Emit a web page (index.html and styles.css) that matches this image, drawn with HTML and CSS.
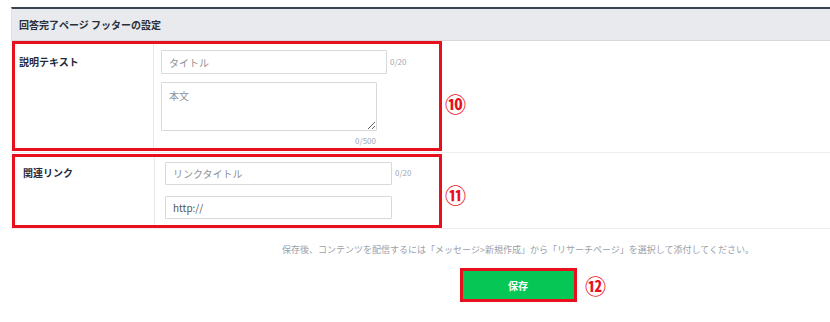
FILE: index.html
```html
<!DOCTYPE html>
<html lang="ja">
<head>
    <meta charset="UTF-8">
    <meta name="viewport" content="width=device-width, initial-scale=1.0">
    <title>回答完了ページ フッターの設定</title>
    <link rel="stylesheet" href="styles.css">
</head>
<body>
    <div class="pagina">
        <div class="cabecera">回答完了ページ フッターの設定</div>

        <div class="fila">
            <div class="marco marco-texto">
                <div class="etiqueta">説明テキスト</div>
                <div class="campos">
                    <div class="linea">
                        <input type="text" class="entrada entrada-titulo" placeholder="タイトル">
                        <span class="contador">0/20</span>
                    </div>
                    <textarea class="cuerpo" placeholder="本文"></textarea>
                    <div class="contador contador-cuerpo">0/500</div>
                </div>
            </div>
            <span class="numero numero-10">⑩</span>
        </div>

        <div class="fila">
            <div class="marco marco-enlace">
                <div class="etiqueta">関連リンク</div>
                <div class="campos">
                    <div class="linea">
                        <input type="text" class="entrada" placeholder="リンクタイトル">
                        <span class="contador">0/20</span>
                    </div>
                    <div class="linea">
                        <input type="text" class="entrada" value="http://">
                    </div>
                </div>
            </div>
            <span class="numero numero-11">⑪</span>
        </div>

        <div class="pie">
            <p class="nota">保存後、コンテンツを配信するには「メッセージ&gt;新規作成」から「リサーチページ」を選択して添付してください。</p>
            <div class="acciones">
                <button class="guardar">保存</button>
                <span class="numero numero-12">⑫</span>
            </div>
        </div>
    </div>
</body>
</html>
```

FILE: styles.css
```css
body {
    margin: 0;
    font-family: "Noto Sans CJK JP", "Noto Sans", sans-serif;
    color: #333;
    background: #fff;
}
.pagina {
    padding: 7px 0 0 11px;
}
.cabecera {
    border-top: 2px solid #3b4350;
    border-bottom: 1px solid #d6d8dd;
    border-left: 1px solid #dfe1e5;
    background: #e9eaee;
    height: 31px;
    line-height: 31px;
    padding-left: 7px;
    font-size: 10px;
    font-weight: bold;
    color: #2b2f36;
}
.fila {
    display: flex;
    border-bottom: 1px solid #eceef1;
}
.marco {
    display: flex;
    width: 424px;
    border: 3px solid #e8101c;
    margin-left: 1px;
}
.marco-texto {
    height: 104px;
    margin-bottom: 1px;
}
.marco-enlace {
    height: 68px;
    margin-top: 1px;
}
.etiqueta {
    width: 139px;
    border-right: 1px solid #e6e8eb;
    font-size: 10px;
    font-weight: bold;
    line-height: 14px;
    color: #1f2a3d;
    padding: 11px 0 0 4px;
    box-sizing: border-box;
}
.marco-enlace .etiqueta {
    width: 140px;
    padding: 9px 0 0 8px;
}
.campos {
    padding: 6px 0 0 7px;
}
.marco-enlace .campos {
    padding: 5px 0 0 10px;
}
.linea {
    display: flex;
    align-items: center;
}
.marco-enlace .linea + .linea {
    margin-top: 11px;
}
.entrada {
    width: 226px;
    height: 24px;
    box-sizing: border-box;
    border: 1px solid #d6d9de;
    border-radius: 1px;
    padding: 0 7px;
    font-family: inherit;
    font-size: 10px;
    color: #555;
    outline: none;
}
.marco-enlace .entrada {
    width: 227px;
    height: 23px;
}
.entrada::placeholder, .cuerpo::placeholder {
    color: #8e9196;
}
.contador {
    font-size: 8px;
    color: #a3a8b1;
    margin-left: 3px;
    margin-bottom: 2px;
}
.cuerpo {
    display: block;
    margin-top: 8px;
    width: 216px;
    height: 49px;
    box-sizing: border-box;
    border: 1px solid #d6d9de;
    border-radius: 1px;
    padding: 5px 7px;
    font-family: inherit;
    font-size: 10px;
    resize: vertical;
    outline: none;
}
.contador-cuerpo {
    width: 215px;
    text-align: right;
    line-height: 14px;
    margin: 3px 0 0;
}
.numero {
    color: #e8101c;
    font-size: 21px;
    font-weight: bold;
    line-height: 22px;
    margin-left: 3px;
}
.numero-10 {
    align-self: center;
    margin-top: 12px;
}
.numero-11 {
    align-self: center;
    margin-top: 6px;
}
.pie {
    margin-left: 195px;
    text-align: center;
}
.nota {
    margin: 14px 0 0;
    font-size: 9px;
    line-height: 14px;
    color: #9aa0a8;
}
.acciones {
    display: flex;
    justify-content: center;
    align-items: center;
    margin-top: 11px;
    position: relative;
}
.guardar {
    width: 117px;
    height: 34px;
    border: 3px solid #e8101c;
    background: #06c755;
    color: #fff;
    font-family: inherit;
    font-size: 10px;
    font-weight: bold;
    padding: 0;
}
.numero-12 {
    position: absolute;
    left: calc(50% + 64px);
    top: 6px;
}
```
